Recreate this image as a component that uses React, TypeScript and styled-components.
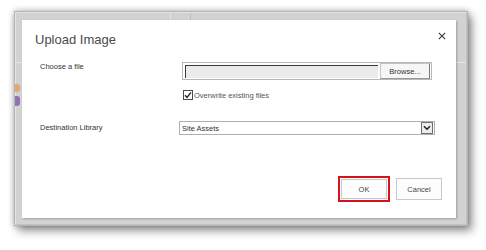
import React from "react";
import styled, { createGlobalStyle } from "styled-components";

const GlobalStyle = createGlobalStyle`
  html, body {
    margin: 0;
    padding: 0;
    background: #ffffff;
  }
  body {
    font-family: "Liberation Sans", Arial, sans-serif;
    color: #444;
  }
`;

const Page = styled.div`
  width: 486px;
  height: 250px;
  padding: 11px 0 0 14px;
  box-sizing: border-box;
`;

const Frame = styled.div`
  width: 454px;
  height: 215px;
  box-sizing: border-box;
  display: flex;
  padding-top: 8px;
  border: 1px solid #b4b4b4;
  background-color: #d2d2d2;
  background-image: linear-gradient(
      to right,
      transparent 155px,
      #e2e2e2 155px,
      #e2e2e2 156px,
      transparent 156px,
      transparent 175px,
      #bdbdbd 175px,
      #bdbdbd 176px,
      transparent 176px
    ),
    linear-gradient(to bottom, transparent 50px, #e6e6e6 50px, #e6e6e6 51px, transparent 51px);
  background-size: 100% 8px, 100% 100%;
  background-repeat: no-repeat;
  box-shadow: 0 0 6px rgba(0, 0, 0, 0.3), 4px 5px 9px rgba(0, 0, 0, 0.4),
    inset 1px 1px 0 #e4e4e4, inset -1px -1px 0 #c2c2c2;
`;

const Gutter = styled.div`
  width: 7px;
  display: flex;
  flex-direction: column;
  padding-top: 64px;
  gap: 4px;
`;

const Blob = styled.span<{ $color: string; $h: number }>`
  display: block;
  width: 5px;
  height: ${(p) => p.$h}px;
  background: ${(p) => p.$color};
  border-radius: 0 3px 3px 0;
  opacity: 0.8;
`;

const Dialog = styled.div`
  width: 434px;
  height: 198px;
  box-sizing: border-box;
  background: #fff;
  box-shadow: 1px 1px 2px rgba(0, 0, 0, 0.25);
  display: flex;
  flex-direction: column;
  padding: 10px 14px 0 13px;
`;

const Header = styled.div`
  display: flex;
  justify-content: space-between;
  align-items: flex-start;
  height: 21px;
`;

const Title = styled.h1`
  margin: 0;
  font-size: 13px;
  line-height: 20px;
  font-weight: normal;
  color: #4a4a4a;
`;

const Close = styled.button`
  border: 0;
  background: none;
  padding: 0;
  margin: 2px -4px 0 0;
  width: 8px;
  height: 8px;
  display: flex;
  cursor: pointer;
`;

const Form = styled.div`
  display: grid;
  grid-template-columns: 142px 1fr;
  padding-left: 5px;
  margin-top: 11px;
`;

const Label = styled.div<{ $top: number }>`
  font-size: 7.5px;
  color: #333;
  line-height: 10px;
  padding-top: ${(p) => p.$top}px;
`;

const FileBox = styled.div`
  width: 250px;
  height: 18px;
  box-sizing: border-box;
  border: 1px solid #b8b8b8;
  display: flex;
  align-items: center;
  padding: 0 1px 0 2px;
  gap: 2px;
`;

const FileField = styled.div`
  flex: 1;
  height: 13px;
  background: #ebebeb;
  border-left: 1px solid #3a3a3a;
  border-top: 1px solid #3a3a3a;
  box-sizing: border-box;
`;

const Browse = styled.button`
  width: 50px;
  height: 16px;
  box-sizing: border-box;
  padding: 0;
  font-family: inherit;
  font-size: 7.5px;
  color: #333;
  background: #f6f6f6;
  border: 1px solid #c4c4c4;
  border-right-color: #777;
  border-bottom-color: #999;
`;

const CheckRow = styled.label`
  display: flex;
  align-items: center;
  gap: 1px;
  margin: 9px 0 0 1px;
  font-size: 7.5px;
  color: #555;
  height: 12px;
`;

const Spacer = styled.div<{ $h: number }>`
  grid-column: 1 / -1;
  height: ${(p) => p.$h}px;
`;

const Select = styled.div`
  width: 256px;
  height: 14px;
  margin-left: -3px;
  box-sizing: border-box;
  border: 1px solid #b0b0b0;
  display: flex;
  align-items: center;
  justify-content: space-between;
  font-size: 7.5px;
  color: #333;
  padding-left: 2px;
`;

const Arrow = styled.span`
  width: 12px;
  height: 12px;
  box-sizing: border-box;
  border: 1px solid #6f6f6f;
  background: #ececec;
  display: flex;
  align-items: center;
  justify-content: center;
  margin-right: 1px;
`;

const Footer = styled.div`
  margin-top: auto;
  margin-bottom: 16px;
  display: flex;
  justify-content: flex-end;
  align-items: center;
  gap: 6px;
`;

const Highlight = styled.div`
  border: 2px solid #d6131b;
  padding: 1px;
  display: flex;
`;

const Button = styled.button<{ $h: number }>`
  width: 46px;
  height: ${(p) => p.$h}px;
  box-sizing: border-box;
  padding: 0;
  background: #fdfdfd;
  border: 1px solid #c8c8c8;
  font-family: inherit;
  font-size: 7.5px;
  color: #444;
`;

export default function App() {
  return (
    <Page>
      <GlobalStyle />
      <Frame>
        <Gutter>
          <Blob $color="#e0a060" $h={8} />
          <Blob $color="#7d5ea8" $h={10} />
        </Gutter>
        <Dialog>
          <Header>
            <Title>Upload Image</Title>
            <Close aria-label="Close">
              <svg width="8" height="8" viewBox="0 0 8 8">
                <path d="M0.8 0.8L7.2 7.2M7.2 0.8L0.8 7.2" stroke="#3c3c3c" strokeWidth="1.2" fill="none" />
              </svg>
            </Close>
          </Header>
          <Form>
            <Label $top={0}>Choose a file</Label>
            <div>
              <FileBox>
                <FileField />
                <Browse>Browse...</Browse>
              </FileBox>
              <CheckRow>
                <svg width="10" height="10" viewBox="0 0 10 10">
                  <rect x="0.5" y="0.5" width="9" height="9" fill="#fff" stroke="#4a4a4a" />
                  <path d="M2 5.2L4 7.4L8 2.4" stroke="#222" strokeWidth="1.4" fill="none" />
                </svg>
                Overwrite existing files
              </CheckRow>
            </div>
            <Spacer $h={20} />
            <Label $top={2}>Destination Library</Label>
            <Select>
              <span>Site Assets</span>
              <Arrow>
                <svg width="8" height="6" viewBox="0 0 8 6">
                  <path d="M1 1.2L4 4.2L7 1.2" stroke="#222" strokeWidth="1.6" fill="none" />
                </svg>
              </Arrow>
            </Select>
          </Form>
          <Footer>
            <Highlight>
              <Button $h={20}>OK</Button>
            </Highlight>
            <Button $h={22}>Cancel</Button>
          </Footer>
        </Dialog>
      </Frame>
    </Page>
  );
}
